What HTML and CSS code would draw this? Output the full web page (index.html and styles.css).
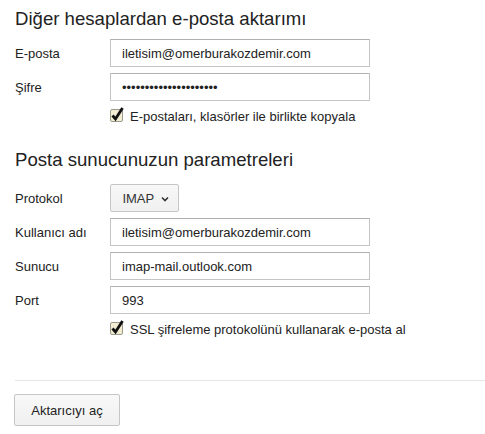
FILE: index.html
```html
<!DOCTYPE html>
<html lang="tr">
<head>
  <meta charset="UTF-8">
  <title>E-posta aktarımı</title>
  <link rel="stylesheet" href="styles.css">
</head>
<body>
  <h2 class="section-title">Diğer hesaplardan e-posta aktarımı</h2>
  <div class="form-row">
    <label class="label">E-posta</label>
    <input class="field" type="text" value="iletisim@omerburakozdemir.com">
  </div>
  <div class="form-row">
    <label class="label">Şifre</label>
    <input class="field" type="password" value="aaaaaaaaaaaaaaaaaaaaa">
  </div>
  <div class="check-row">
    <span class="check">
      <svg width="15" height="17" viewBox="0 0 15 17">
        <rect x="0.5" y="3.5" width="12" height="12" rx="1.5" fill="#f2edd2" stroke="#9a9a8a"/>
        <path d="M2.5 9.5 L5.5 13 L12.5 2" fill="none" stroke="#111" stroke-width="2.8" stroke-linejoin="miter"/>
      </svg>
    </span>
    <span>E-postaları, klasörler ile birlikte kopyala</span>
  </div>

  <h2 class="section-title second">Posta sunucunuzun parametreleri</h2>
  <div class="form-row">
    <label class="label">Protokol</label>
    <button class="select-btn">IMAP <span class="caret">
      <svg width="8" height="6" viewBox="0 0 8 6"><path d="M1 1.5 L4 4.5 L7 1.5" fill="none" stroke="#333" stroke-width="1.6"/></svg>
    </span></button>
  </div>
  <div class="form-row">
    <label class="label">Kullanıcı adı</label>
    <input class="field" type="text" value="iletisim@omerburakozdemir.com">
  </div>
  <div class="form-row">
    <label class="label">Sunucu</label>
    <input class="field" type="text" value="imap-mail.outlook.com">
  </div>
  <div class="form-row">
    <label class="label">Port</label>
    <input class="field" type="text" value="993">
  </div>
  <div class="check-row">
    <span class="check">
      <svg width="15" height="17" viewBox="0 0 15 17">
        <rect x="0.5" y="3.5" width="12" height="12" rx="1.5" fill="#f2edd2" stroke="#9a9a8a"/>
        <path d="M2.5 9.5 L5.5 13 L12.5 2" fill="none" stroke="#111" stroke-width="2.8" stroke-linejoin="miter"/>
      </svg>
    </span>
    <span>SSL şifreleme protokolünü kullanarak e-posta al</span>
  </div>

  <hr class="divider">
  <button class="btn">Aktarıcıyı aç</button>
</body>
</html>
```

FILE: styles.css
```css
body {
  font-family: Arial, 'Liberation Sans', sans-serif;
  font-size: 13px;
  color: #222;
  background-color: #fff;
  margin: 0;
  padding: 9px 0 0 15px;
}
.section-title {
  font-size: 18.6px;
  font-weight: normal;
  color: #222;
  margin: 0 0 10px 0;
  line-height: 20px;
}
.section-title.second {
  margin-top: 24px;
  margin-bottom: 14px;
}
.form-row {
  display: flex;
  align-items: flex-start;
  margin-bottom: 6px;
}
.label {
  width: 95px;
  padding-top: 7px;
}
.field {
  box-sizing: border-box;
  width: 260px;
  height: 28px;
  border: 1px solid #c4c4c4;
  border-top-color: #b0b0b0;
  padding: 0 11px;
  font-family: Arial, 'Liberation Sans', sans-serif;
  font-size: 13px;
  color: #222;
  outline: none;
}
.select-btn {
  box-sizing: border-box;
  height: 28px;
  width: 69px;
  border: 1px solid #c6c6c6;
  border-radius: 2px;
  background: linear-gradient(#f8f8f8, #f0f0f0);
  font-family: Arial, 'Liberation Sans', sans-serif;
  font-size: 13px;
  color: #333;
  padding: 0 0 0 2px;
}
.caret {
  display: inline-block;
  margin-left: 3px;
  vertical-align: 1px;
}
.check-row {
  display: flex;
  align-items: center;
  margin-left: 95px;
  height: 20px;
  margin-top: -1px;
}
.check {
  display: inline-block;
  width: 15px;
  height: 17px;
  margin-right: 5px;
  margin-top: -4px;
}
.divider {
  border: none;
  border-top: 1px solid #e5e5e5;
  margin: 41px 0 13px 0;
}
.btn {
  box-sizing: border-box;
  height: 32px;
  width: 106px;
  margin-left: -1px;
  border: 1px solid #c6c6c6;
  border-radius: 2px;
  background: linear-gradient(#f8f8f8, #f0f0f0);
  font-family: Arial, 'Liberation Sans', sans-serif;
  font-size: 13px;
  color: #222;
}
```
